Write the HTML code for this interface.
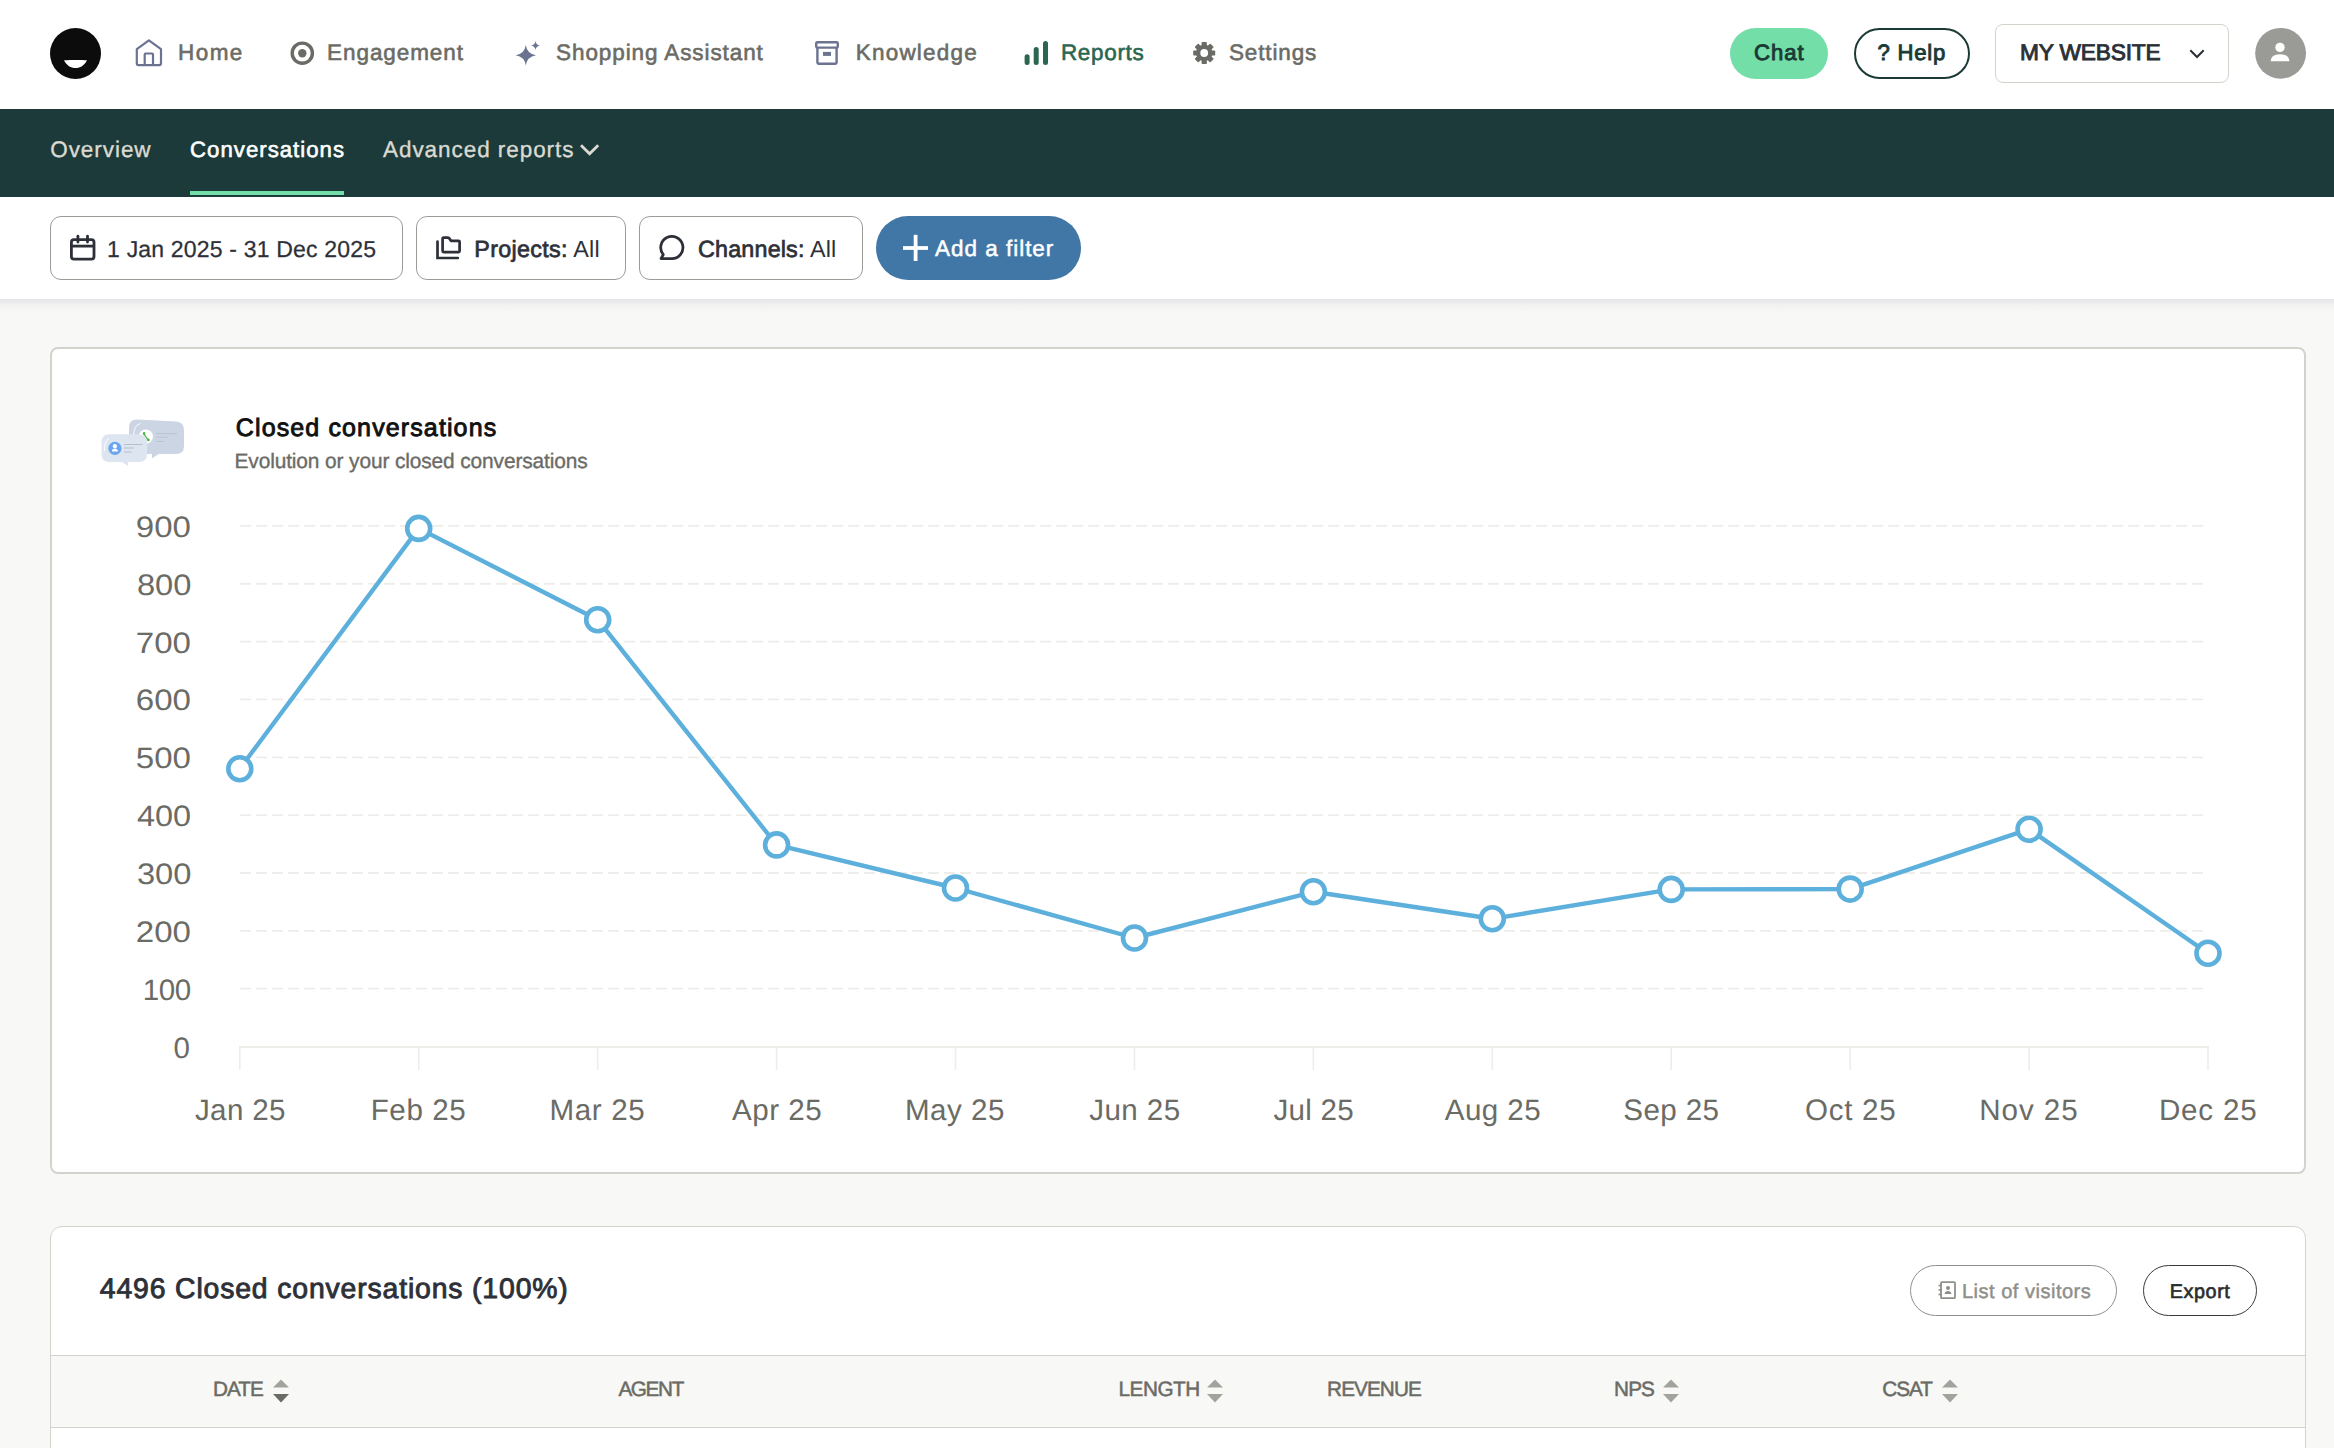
<!DOCTYPE html>
<html><head><meta charset="utf-8"><style>
html,body{margin:0;padding:0;overflow:hidden;}
body{width:2334px;height:1448px;overflow:hidden;position:relative;background:#f8f8f6;font-family:"Liberation Sans",sans-serif;}
.abs{position:absolute;}
.t{position:absolute;white-space:nowrap;line-height:1;text-rendering:geometricPrecision;}
@media (max-width:1500px){body{zoom:0.5;}}
b{font-weight:700;} .sb{-webkit-text-stroke:0.7px currentColor;}
</style></head><body>
<div class="abs" style="left:0;top:0;width:2334px;height:109px;background:#fff"></div>
<div class="abs" style="left:0;top:109px;width:2334px;height:88px;background:#1b3a39"></div>
<div class="abs" style="left:190px;top:191px;width:154px;height:3.5px;background:#74dea8"></div>
<div class="abs" style="left:0;top:197px;width:2334px;height:102px;background:#fff"></div>
<div class="abs" style="left:0;top:299px;width:2334px;height:14px;background:linear-gradient(#e3e4e7,#f2f2f1 45%,#f8f8f6)"></div>
<!-- header buttons -->
<div class="abs" style="left:1730px;top:28px;width:98px;height:51px;border-radius:26px;background:#74dea8"></div>
<div class="abs" style="left:1854px;top:28px;width:116px;height:51px;border-radius:26px;border:2px solid #1b3a36;box-sizing:border-box"></div>
<div class="abs" style="left:1995px;top:24px;width:234px;height:58.5px;border-radius:8px;border:1.5px solid #d3d2ca;box-sizing:border-box"></div>
<!-- filter buttons -->
<div class="abs" style="left:50px;top:216px;width:353px;height:64px;border-radius:11px;border:1.4px solid #9c9c97;box-sizing:border-box"></div>
<div class="abs" style="left:416px;top:216px;width:209.5px;height:64px;border-radius:11px;border:1.4px solid #9c9c97;box-sizing:border-box"></div>
<div class="abs" style="left:639px;top:216px;width:224px;height:64px;border-radius:11px;border:1.4px solid #9c9c97;box-sizing:border-box"></div>
<div class="abs" style="left:876px;top:216px;width:205px;height:64px;border-radius:32px;background:#4177a6"></div>
<!-- cards -->
<div class="abs" style="left:50px;top:347px;width:2256px;height:827px;border-radius:8px;border:2px solid #d3d3ce;box-sizing:border-box;background:#fff"></div>
<div class="abs" style="left:50px;top:1226px;width:2256px;height:400px;border-radius:12px;border:1.5px solid #d3d3ce;box-sizing:border-box;background:#fff"></div>
<div class="abs" style="left:51px;top:1355px;width:2254px;height:73px;background:#f8f8f6;border-top:1.5px solid #d3d3ce;border-bottom:1.5px solid #d3d3ce;box-sizing:border-box"></div>
<div class="abs" style="left:1910px;top:1265px;width:207px;height:51px;border-radius:26px;border:1.5px solid #8f8f8a;box-sizing:border-box"></div>
<div class="abs" style="left:2143px;top:1265px;width:114px;height:51px;border-radius:26px;border:1.6px solid #3a3a38;box-sizing:border-box"></div>
<svg class="abs" style="left:0;top:0" width="2334" height="1448" viewBox="0 0 2334 1448">

<!-- logo -->
<circle cx="75.5" cy="53.5" r="25.5" fill="#0b0c0b"/>
<path d="M64,60.2 C70,59.9 81,59.7 87,60.2 C84.2,65.6 80.3,68 75.5,68 C70.7,68 66.8,65.6 64,60.2 Z" fill="#fff"/>
<!-- home -->
<path d="M136.8,49.2 L148.9,40.4 L161,49.2 L161,63.3 Q161,65.1 159.2,65.1 L138.6,65.1 Q136.8,65.1 136.8,63.3 Z" fill="none" stroke="#6b7390" stroke-width="2.2" stroke-linejoin="round"/>
<path d="M144.7,65.1 L144.7,54.4 Q144.7,53.5 145.6,53.5 L152.1,53.5 Q153,53.5 153,54.4 L153,65.1" fill="none" stroke="#6b7390" stroke-width="2.2"/>
<!-- engagement -->
<circle cx="302.3" cy="53.2" r="10.1" fill="none" stroke="#6b6b66" stroke-width="3.4"/>
<circle cx="302.3" cy="53.2" r="4.2" fill="#6b6b66"/>
<!-- sparkle -->
<path d="M525.8,45 Q527,53.8 536,55.3 Q527,56.8 525.8,65.6 Q524.6,56.8 515.7,55.3 Q524.6,53.8 525.8,45 Z" fill="#6b7390"/>
<path d="M535.5,41 Q536,45 540,45.5 Q536,46 535.5,50 Q535,46 531,45.5 Q535,45 535.5,41 Z" fill="#6b7390"/>
<!-- knowledge -->
<rect x="816.2" y="42.2" width="21.6" height="5.4" rx="1.2" fill="none" stroke="#6b7390" stroke-width="2.4"/>
<path d="M817.4,47.6 L817.4,62.6 Q817.4,63.8 818.6,63.8 L835.4,63.8 Q836.6,63.8 836.6,62.6 L836.6,47.6" fill="none" stroke="#6b7390" stroke-width="2.4"/>
<rect x="823" y="51.9" width="8" height="4" fill="#6b7390"/>
<!-- reports -->
<line x1="1027.1" y1="56.7" x2="1027.1" y2="62.5" stroke="#2a6650" stroke-width="5" stroke-linecap="round"/>
<line x1="1036.2" y1="49.5" x2="1036.2" y2="62.5" stroke="#2a6650" stroke-width="5" stroke-linecap="round"/>
<line x1="1045.5" y1="43.5" x2="1045.5" y2="62.5" stroke="#2a6650" stroke-width="5" stroke-linecap="round"/>
<!-- settings gear -->
<g transform="translate(1204.2,53)" fill="#6b6b66">
<circle r="8.2"/>
<rect x="-2.6" y="-11" width="5.2" height="22" rx="0.8"/>
<rect x="-2.6" y="-11" width="5.2" height="22" rx="0.8" transform="rotate(45)"/>
<rect x="-2.6" y="-11" width="5.2" height="22" rx="0.8" transform="rotate(90)"/>
<rect x="-2.6" y="-11" width="5.2" height="22" rx="0.8" transform="rotate(135)"/>
<circle r="3.9" fill="#fff"/>
</g>
<!-- site chevron -->
<path d="M2190.3,50.3 L2197,57 L2203.7,50.3" fill="none" stroke="#2a2f36" stroke-width="2"/>
<!-- avatar -->
<circle cx="2280.6" cy="53.3" r="25.4" fill="#9a9b96"/>
<circle cx="2280" cy="47.4" r="4.7" fill="#fff"/>
<path d="M2270.6,61.3 Q2270.8,54.2 2280,54.2 Q2289.2,54.2 2289.4,61.3 Z" fill="#fff"/>
<!-- advanced chevron -->
<path d="M581,145.2 L589.6,153.8 L598.2,145.2" fill="none" stroke="#dcdad2" stroke-width="2.8"/>
<!-- calendar -->
<rect x="71.4" y="239.6" width="22.6" height="19.5" rx="2.6" fill="none" stroke="#2d3038" stroke-width="2.8"/>
<line x1="71.4" y1="246.1" x2="94" y2="246.1" stroke="#2d3038" stroke-width="2.8"/>
<line x1="77.9" y1="236.2" x2="77.9" y2="242" stroke="#2d3038" stroke-width="2.8" stroke-linecap="round"/>
<line x1="87.5" y1="236.2" x2="87.5" y2="242" stroke="#2d3038" stroke-width="2.8" stroke-linecap="round"/>
<!-- projects folder -->
<path d="M442.6,238.5 Q442.6,237.6 443.6,237.6 L447.5,237.6 Q448.6,237.6 449.3,238.4 L451,240.8 L458.6,240.8 Q459.6,240.8 459.6,241.8 L459.6,251 Q459.6,252.1 458.6,252.1 L443.6,252.1 Q442.6,252.1 442.6,251 Z" fill="none" stroke="#2d3038" stroke-width="2.7" stroke-linejoin="round"/>
<path d="M437.5,241.5 L437.5,258 L457.8,258" fill="none" stroke="#2d3038" stroke-width="2.7" stroke-linecap="round"/>
<!-- channels bubble -->
<path d="M663.3,254.6 A11.1,11.1 0 1 1 671.6,258.6 L661,258.6 Z" fill="none" stroke="#2d3038" stroke-width="2.8" stroke-linejoin="round"/>
<!-- plus -->
<line x1="915.6" y1="234.8" x2="915.6" y2="261" stroke="#fff" stroke-width="3.8"/>
<line x1="903" y1="248" x2="928" y2="248" stroke="#fff" stroke-width="3.8"/>
<!-- list of visitors icon -->
<rect x="1941" y="1282.2" width="14" height="16" rx="1" fill="none" stroke="#8f8f8a" stroke-width="1.8"/>
<line x1="1938.5" y1="1285.5" x2="1942" y2="1285.5" stroke="#8f8f8a" stroke-width="1.6"/>
<line x1="1938.5" y1="1290" x2="1942" y2="1290" stroke="#8f8f8a" stroke-width="1.6"/>
<line x1="1938.5" y1="1294.5" x2="1942" y2="1294.5" stroke="#8f8f8a" stroke-width="1.6"/>
<circle cx="1948" cy="1288" r="2" fill="#8f8f8a"/>
<path d="M1944.5,1294 Q1945,1291 1948,1291 Q1951,1291 1951.5,1294 Z" fill="#8f8f8a"/>


<g>
<path d="M137,419.5 L176,421.5 Q184,422 184,430 L184,446 Q184,454 176,454 L158.5,454 L152,458.6 L152,454 L137,454 Q129,454 129,446 L129,427.5 Q129,419.5 137,419.5 Z" fill="#cbd5e3"/>
<path d="M133.5,437 Q133.5,425 140.5,423.5" fill="none" stroke="#fff" stroke-width="1" opacity="0.9"/>
<circle cx="145.8" cy="436.6" r="7.2" fill="#fff"/>
<path d="M144,433.6 Q144.6,436.8 148.2,439.8" fill="none" stroke="#4cb848" stroke-width="1.6" stroke-linecap="round"/><circle cx="144.1" cy="433.4" r="1.3" fill="#4cb848"/><circle cx="148.4" cy="439.9" r="1.3" fill="#4cb848"/>
<line x1="156" y1="433.5" x2="177" y2="433.8" stroke="#b5bfce" stroke-width="0.8"/>
<line x1="156" y1="437.2" x2="167.5" y2="437.3" stroke="#b5bfce" stroke-width="0.8"/>
<line x1="156" y1="441.5" x2="164" y2="441.5" stroke="#b5bfce" stroke-width="0.8"/>
<path d="M109.5,434.2 L139,434.2 Q147,434.2 147,442 L147,454 Q147,462 139,462 L128,462 L128,466 L122,462 L109.5,462 Q101.6,462 101.6,454 L101.6,442 Q101.6,434.2 109.5,434.2 Z" fill="#dde5f0"/>
<path d="M104.5,451 Q104.5,440 109,438.5" fill="none" stroke="#fff" stroke-width="1" opacity="0.9"/>
<circle cx="114.9" cy="448.3" r="6.6" fill="#6aa5f0"/>
<circle cx="114.9" cy="446.2" r="2.1" fill="#fff"/>
<path d="M111.8,451.6 Q112.2,448.6 114.9,448.6 Q117.6,448.6 118,451.6 Z" fill="#fff"/>
<line x1="124" y1="444.5" x2="142.5" y2="444.5" stroke="#aab4c4" stroke-width="0.8"/>
<line x1="124" y1="448" x2="134" y2="448" stroke="#aab4c4" stroke-width="0.8"/>
<line x1="124" y1="452" x2="131.5" y2="452" stroke="#aab4c4" stroke-width="0.8"/>
</g>

<line x1="240" y1="988.70" x2="2208" y2="988.70" stroke="#eeede9" stroke-width="1.8" stroke-dasharray="11 5"/>
<line x1="240" y1="930.85" x2="2208" y2="930.85" stroke="#eeede9" stroke-width="1.8" stroke-dasharray="11 5"/>
<line x1="240" y1="873.00" x2="2208" y2="873.00" stroke="#eeede9" stroke-width="1.8" stroke-dasharray="11 5"/>
<line x1="240" y1="815.15" x2="2208" y2="815.15" stroke="#eeede9" stroke-width="1.8" stroke-dasharray="11 5"/>
<line x1="240" y1="757.30" x2="2208" y2="757.30" stroke="#eeede9" stroke-width="1.8" stroke-dasharray="11 5"/>
<line x1="240" y1="699.45" x2="2208" y2="699.45" stroke="#eeede9" stroke-width="1.8" stroke-dasharray="11 5"/>
<line x1="240" y1="641.60" x2="2208" y2="641.60" stroke="#eeede9" stroke-width="1.8" stroke-dasharray="11 5"/>
<line x1="240" y1="583.75" x2="2208" y2="583.75" stroke="#eeede9" stroke-width="1.8" stroke-dasharray="11 5"/>
<line x1="240" y1="525.90" x2="2208" y2="525.90" stroke="#eeede9" stroke-width="1.8" stroke-dasharray="11 5"/>
<line x1="239" y1="1047" x2="2209" y2="1047" stroke="#ededea" stroke-width="1.8"/>
<line x1="239.8" y1="1047" x2="239.8" y2="1070" stroke="#ededea" stroke-width="1.6"/>
<line x1="418.7" y1="1047" x2="418.7" y2="1070" stroke="#ededea" stroke-width="1.6"/>
<line x1="597.7" y1="1047" x2="597.7" y2="1070" stroke="#ededea" stroke-width="1.6"/>
<line x1="776.6" y1="1047" x2="776.6" y2="1070" stroke="#ededea" stroke-width="1.6"/>
<line x1="955.5" y1="1047" x2="955.5" y2="1070" stroke="#ededea" stroke-width="1.6"/>
<line x1="1134.5" y1="1047" x2="1134.5" y2="1070" stroke="#ededea" stroke-width="1.6"/>
<line x1="1313.4" y1="1047" x2="1313.4" y2="1070" stroke="#ededea" stroke-width="1.6"/>
<line x1="1492.3" y1="1047" x2="1492.3" y2="1070" stroke="#ededea" stroke-width="1.6"/>
<line x1="1671.2" y1="1047" x2="1671.2" y2="1070" stroke="#ededea" stroke-width="1.6"/>
<line x1="1850.2" y1="1047" x2="1850.2" y2="1070" stroke="#ededea" stroke-width="1.6"/>
<line x1="2029.1" y1="1047" x2="2029.1" y2="1070" stroke="#ededea" stroke-width="1.6"/>
<line x1="2208.0" y1="1047" x2="2208.0" y2="1070" stroke="#ededea" stroke-width="1.6"/>
<polyline points="239.8,768.7 418.7,528.4 597.7,619.7 776.6,844.9 955.5,888.0 1134.5,938.0 1313.4,891.8 1492.3,918.8 1671.2,889.4 1850.2,889.1 2029.1,829.2 2208.0,953.2" fill="none" stroke="#5eb0dc" stroke-width="4.4" stroke-linejoin="round"/>
<circle cx="239.8" cy="768.7" r="11.5" fill="#fff" stroke="#5eb0dc" stroke-width="4.6"/>
<circle cx="418.7" cy="528.4" r="11.5" fill="#fff" stroke="#5eb0dc" stroke-width="4.6"/>
<circle cx="597.7" cy="619.7" r="11.5" fill="#fff" stroke="#5eb0dc" stroke-width="4.6"/>
<circle cx="776.6" cy="844.9" r="11.5" fill="#fff" stroke="#5eb0dc" stroke-width="4.6"/>
<circle cx="955.5" cy="888.0" r="11.5" fill="#fff" stroke="#5eb0dc" stroke-width="4.6"/>
<circle cx="1134.5" cy="938.0" r="11.5" fill="#fff" stroke="#5eb0dc" stroke-width="4.6"/>
<circle cx="1313.4" cy="891.8" r="11.5" fill="#fff" stroke="#5eb0dc" stroke-width="4.6"/>
<circle cx="1492.3" cy="918.8" r="11.5" fill="#fff" stroke="#5eb0dc" stroke-width="4.6"/>
<circle cx="1671.2" cy="889.4" r="11.5" fill="#fff" stroke="#5eb0dc" stroke-width="4.6"/>
<circle cx="1850.2" cy="889.1" r="11.5" fill="#fff" stroke="#5eb0dc" stroke-width="4.6"/>
<circle cx="2029.1" cy="829.2" r="11.5" fill="#fff" stroke="#5eb0dc" stroke-width="4.6"/>
<circle cx="2208.0" cy="953.2" r="11.5" fill="#fff" stroke="#5eb0dc" stroke-width="4.6"/>
<path d="M273.0,1387.5 L281.0,1379.5 L289.0,1387.5 Z" fill="#a3a39e"/><path d="M273.0,1394 L281.0,1402.5 L289.0,1394 Z" fill="#6b6b66"/><path d="M1207.0,1387.5 L1215.0,1379.5 L1223.0,1387.5 Z" fill="#a3a39e"/><path d="M1207.0,1394 L1215.0,1402.5 L1223.0,1394 Z" fill="#a3a39e"/><path d="M1663.0,1387.5 L1671.0,1379.5 L1679.0,1387.5 Z" fill="#a3a39e"/><path d="M1663.0,1394 L1671.0,1402.5 L1679.0,1394 Z" fill="#a3a39e"/><path d="M1942.0,1387.5 L1950.0,1379.5 L1958.0,1387.5 Z" fill="#a3a39e"/><path d="M1942.0,1394 L1950.0,1402.5 L1958.0,1394 Z" fill="#a3a39e"/>
</svg>
<div class="t" style="left:178.0px;top:41.7px;font-size:22.49px;letter-spacing:1.45px;color:#6b6b66;-webkit-text-stroke:0.6px currentColor;">Home</div>
<div class="t" style="left:327.1px;top:41.7px;font-size:22.49px;letter-spacing:0.93px;color:#6b6b66;-webkit-text-stroke:0.6px currentColor;">Engagement</div>
<div class="t" style="left:556.1px;top:41.7px;font-size:22.49px;letter-spacing:0.91px;color:#6b6b66;-webkit-text-stroke:0.6px currentColor;">Shopping Assistant</div>
<div class="t" style="left:855.8px;top:41.7px;font-size:22.49px;letter-spacing:1.20px;color:#6b6b66;-webkit-text-stroke:0.6px currentColor;">Knowledge</div>
<div class="t" style="left:1060.9px;top:41.7px;font-size:22.49px;letter-spacing:0.69px;color:#2a6650;-webkit-text-stroke:0.6px currentColor;">Reports</div>
<div class="t" style="left:1229.0px;top:41.7px;font-size:22.49px;letter-spacing:0.87px;color:#6b6b66;-webkit-text-stroke:0.6px currentColor;">Settings</div>
<div class="t" style="left:1754.1px;top:41.5px;font-size:22.14px;letter-spacing:0.91px;color:#1b3a36;-webkit-text-stroke:0.9px currentColor;">Chat</div>
<div class="t" style="left:1877.4px;top:41.5px;font-size:22.14px;letter-spacing:0.78px;color:#1b3a36;-webkit-text-stroke:0.9px currentColor;">? Help</div>
<div class="t" style="left:2019.9px;top:40.7px;font-size:22.72px;letter-spacing:-0.16px;color:#2a2f36;-webkit-text-stroke:0.9px currentColor;">MY WEBSITE</div>
<div class="t" style="left:50.2px;top:139.4px;font-size:22.49px;letter-spacing:0.96px;color:#dcdad2;-webkit-text-stroke:0.35px currentColor;">Overview</div>
<div class="t" style="left:190.0px;top:139.4px;font-size:22.20px;letter-spacing:1.02px;color:#ffffff;-webkit-text-stroke:0.6px currentColor;">Conversations</div>
<div class="t" style="left:383.0px;top:139.4px;font-size:22.49px;letter-spacing:0.95px;color:#dcdad2;-webkit-text-stroke:0.35px currentColor;">Advanced reports</div>
<div class="t" style="left:107.1px;top:237.8px;font-size:23.04px;letter-spacing:0.17px;color:#2d3038;-webkit-text-stroke:0.25px currentColor;">1 Jan 2025 - 31 Dec 2025</div>
<div class="t" style="left:474.3px;top:238.1px;font-size:23.33px;letter-spacing:0.29px;color:#2d3038;"><span class="sb">Projects:</span> All</div>
<div class="t" style="left:698.1px;top:238.1px;font-size:23.33px;letter-spacing:0.16px;color:#2d3038;"><span class="sb">Channels:</span> All</div>
<div class="t" style="left:935.1px;top:237.6px;font-size:22.46px;letter-spacing:0.99px;color:#ffffff;-webkit-text-stroke:0.5px currentColor;">Add a filter</div>
<div class="t" style="left:235.8px;top:415.5px;font-size:25.04px;letter-spacing:1.11px;color:#111111;-webkit-text-stroke:0.9px currentColor;">Closed conversations</div>
<div class="t" style="left:234.5px;top:452.4px;font-size:20.90px;letter-spacing:-0.12px;color:#6b6b66;-webkit-text-stroke:0.35px currentColor;">Evolution or your closed conversations</div>
<div class="t" style="left:99.8px;top:1275.4px;font-size:28.38px;letter-spacing:0.85px;color:#2d3038;-webkit-text-stroke:0.9px currentColor;">4496 Closed conversations (100%)</div>
<div class="t" style="left:1961.9px;top:1281.7px;font-size:20.06px;letter-spacing:0.50px;color:#8f8f8a;-webkit-text-stroke:0.45px currentColor;">List of visitors</div>
<div class="t" style="left:2169.8px;top:1282.7px;font-size:19.83px;letter-spacing:0.54px;color:#2d2d2d;-webkit-text-stroke:0.65px currentColor;">Export</div>
<div class="t" style="left:213.1px;top:1380.3px;font-size:20.72px;letter-spacing:-0.99px;color:#6b6b66;-webkit-text-stroke:0.5px currentColor;">DATE</div>
<div class="t" style="left:618.4px;top:1380.3px;font-size:20.72px;letter-spacing:-1.37px;color:#6b6b66;-webkit-text-stroke:0.5px currentColor;">AGENT</div>
<div class="t" style="left:1118.5px;top:1380.3px;font-size:20.72px;letter-spacing:-0.45px;color:#6b6b66;-webkit-text-stroke:0.5px currentColor;">LENGTH</div>
<div class="t" style="left:1327.1px;top:1380.3px;font-size:20.72px;letter-spacing:-0.92px;color:#6b6b66;-webkit-text-stroke:0.5px currentColor;">REVENUE</div>
<div class="t" style="left:1614.1px;top:1380.3px;font-size:20.72px;letter-spacing:-0.93px;color:#6b6b66;-webkit-text-stroke:0.5px currentColor;">NPS</div>
<div class="t" style="left:1882.2px;top:1380.3px;font-size:20.72px;letter-spacing:-1.00px;color:#6b6b66;-webkit-text-stroke:0.5px currentColor;">CSAT</div>
<div class="t" style="left:195.0px;top:1095.5px;font-size:29.57px;letter-spacing:0.33px;color:#6b6b66;">Jan 25</div>
<div class="t" style="left:370.7px;top:1095.5px;font-size:29.57px;letter-spacing:0.61px;color:#6b6b66;">Feb 25</div>
<div class="t" style="left:549.4px;top:1095.5px;font-size:29.57px;letter-spacing:0.67px;color:#6b6b66;">Mar 25</div>
<div class="t" style="left:732.0px;top:1095.5px;font-size:29.57px;letter-spacing:0.51px;color:#6b6b66;">Apr 25</div>
<div class="t" style="left:904.9px;top:1095.5px;font-size:29.57px;letter-spacing:0.53px;color:#6b6b66;">May 25</div>
<div class="t" style="left:1089.2px;top:1095.5px;font-size:29.57px;letter-spacing:0.45px;color:#6b6b66;">Jun 25</div>
<div class="t" style="left:1273.4px;top:1095.5px;font-size:29.57px;letter-spacing:0.30px;color:#6b6b66;">Jul 25</div>
<div class="t" style="left:1444.8px;top:1095.5px;font-size:29.57px;letter-spacing:0.43px;color:#6b6b66;">Aug 25</div>
<div class="t" style="left:1623.3px;top:1095.5px;font-size:29.57px;letter-spacing:0.41px;color:#6b6b66;">Sep 25</div>
<div class="t" style="left:1804.9px;top:1095.5px;font-size:29.57px;letter-spacing:0.75px;color:#6b6b66;">Oct 25</div>
<div class="t" style="left:1979.3px;top:1095.5px;font-size:29.57px;letter-spacing:0.93px;color:#6b6b66;">Nov 25</div>
<div class="t" style="left:2158.9px;top:1095.5px;font-size:29.57px;letter-spacing:0.81px;color:#6b6b66;">Dec 25</div>
<div class="t" style="left:173.5px;top:1033.5px;font-size:29.57px;letter-spacing:1.18px;color:#6b6b66;">0</div>
<div class="t" style="left:142.7px;top:975.6px;font-size:29.57px;letter-spacing:-0.46px;color:#6b6b66;">100</div>
<div class="t" style="left:136.3px;top:917.7px;font-size:29.57px;letter-spacing:0.00px;color:#6b6b66;transform:scaleX(1.1185);transform-origin:1.51px 0;">200</div>
<div class="t" style="left:136.8px;top:859.9px;font-size:29.57px;letter-spacing:0.00px;color:#6b6b66;transform:scaleX(1.1057);transform-origin:0.97px 0;">300</div>
<div class="t" style="left:137.1px;top:802.0px;font-size:29.57px;letter-spacing:0.00px;color:#6b6b66;transform:scaleX(1.0991);transform-origin:0.68px 0;">400</div>
<div class="t" style="left:136.3px;top:744.2px;font-size:29.57px;letter-spacing:0.00px;color:#6b6b66;transform:scaleX(1.1190);transform-origin:1.53px 0;">500</div>
<div class="t" style="left:136.3px;top:686.3px;font-size:29.57px;letter-spacing:0.00px;color:#6b6b66;transform:scaleX(1.1192);transform-origin:1.54px 0;">600</div>
<div class="t" style="left:136.3px;top:628.5px;font-size:29.57px;letter-spacing:0.00px;color:#6b6b66;transform:scaleX(1.1192);transform-origin:1.54px 0;">700</div>
<div class="t" style="left:136.8px;top:570.6px;font-size:29.57px;letter-spacing:0.00px;color:#6b6b66;transform:scaleX(1.1057);transform-origin:0.97px 0;">800</div>
<div class="t" style="left:136.4px;top:512.8px;font-size:29.57px;letter-spacing:0.00px;color:#6b6b66;transform:scaleX(1.1171);transform-origin:1.45px 0;">900</div>
</body></html>
